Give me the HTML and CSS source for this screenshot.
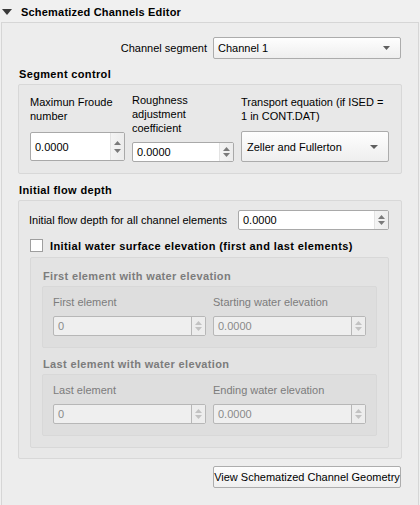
FILE: index.html
```html
<!DOCTYPE html>
<html>
<head>
<meta charset="utf-8">
<link rel="stylesheet" href="styles.css">
</head>
<body>
<div class="header">
  <svg class="caret" width="10" height="6" viewBox="0 0 10 6"><path d="M0 0H10L5 6Z" fill="#3a3a3a"/></svg>
  <span class="title">Schematized Channels Editor</span>
</div>
<div class="frame">
  <div class="row-seg">
    <span>Channel segment</span>
    <div class="combo combo-seg"><span>Channel 1</span><svg class="drop" width="7" height="4" viewBox="0 0 7 4"><path d="M0 0H7L3.5 4Z" fill="#5f5f5f"/></svg></div>
  </div>

  <div class="gtitle">Segment control</div>
  <div class="group g-seg">
    <div class="col c1">
      <div class="lbl">Maximun Froude<br>number</div>
      <div class="spin spin-tall"><span class="val">0.0000</span><span class="btns"><svg width="7" height="4" viewBox="0 0 7 4"><path d="M0 4H7L3.5 0Z"/></svg><svg width="7" height="4" viewBox="0 0 7 4"><path d="M0 0H7L3.5 4Z"/></svg></span></div>
    </div>
    <div class="col c2">
      <div class="lbl">Roughness<br>adjustment<br>coefficient</div>
      <div class="spin spin-c2"><span class="val">0.0000</span><span class="btns"><svg width="7" height="4" viewBox="0 0 7 4"><path d="M0 4H7L3.5 0Z"/></svg><svg width="7" height="4" viewBox="0 0 7 4"><path d="M0 0H7L3.5 4Z"/></svg></span></div>
    </div>
    <div class="col c3">
      <div class="lbl">Transport equation (if ISED =<br>1 in CONT.DAT)</div>
      <div class="combo combo-tall"><span>Zeller and Fullerton</span><svg class="drop" width="8" height="4" viewBox="0 0 8 4"><path d="M0 0H8L4 4Z" fill="#5f5f5f"/></svg></div>
    </div>
  </div>

  <div class="gtitle t2">Initial flow depth</div>
  <div class="group g-flow">
    <div class="row-depth">
      <span>Initial flow depth for all channel elements</span>
      <div class="spin spin-depth"><span class="val">0.0000</span><span class="btns"><svg width="7" height="4" viewBox="0 0 7 4"><path d="M0 4H7L3.5 0Z"/></svg><svg width="7" height="4" viewBox="0 0 7 4"><path d="M0 0H7L3.5 4Z"/></svg></span></div>
    </div>
    <div class="row-check">
      <span class="check"></span>
      <span class="check-lbl">Initial water surface elevation (first and last elements)</span>
    </div>
    <div class="group g-inner">
      <div class="gtitle dis">First element with water elevation</div>
      <div class="group g-sub">
        <div class="subcol">
          <div class="lbl dis-t">First element</div>
          <div class="spin dis-spin"><span class="val">0</span><span class="btns"><svg width="7" height="4" viewBox="0 0 7 4"><path d="M0 4H7L3.5 0Z"/></svg><svg width="7" height="4" viewBox="0 0 7 4"><path d="M0 0H7L3.5 4Z"/></svg></span></div>
        </div>
        <div class="subcol">
          <div class="lbl dis-t">Starting water elevation</div>
          <div class="spin dis-spin"><span class="val">0.0000</span><span class="btns"><svg width="7" height="4" viewBox="0 0 7 4"><path d="M0 4H7L3.5 0Z"/></svg><svg width="7" height="4" viewBox="0 0 7 4"><path d="M0 0H7L3.5 4Z"/></svg></span></div>
        </div>
      </div>
      <div class="gtitle dis t3">Last element with water elevation</div>
      <div class="group g-sub">
        <div class="subcol">
          <div class="lbl dis-t">Last element</div>
          <div class="spin dis-spin"><span class="val">0</span><span class="btns"><svg width="7" height="4" viewBox="0 0 7 4"><path d="M0 4H7L3.5 0Z"/></svg><svg width="7" height="4" viewBox="0 0 7 4"><path d="M0 0H7L3.5 4Z"/></svg></span></div>
        </div>
        <div class="subcol">
          <div class="lbl dis-t">Ending water elevation</div>
          <div class="spin dis-spin"><span class="val">0.0000</span><span class="btns"><svg width="7" height="4" viewBox="0 0 7 4"><path d="M0 4H7L3.5 0Z"/></svg><svg width="7" height="4" viewBox="0 0 7 4"><path d="M0 0H7L3.5 4Z"/></svg></span></div>
        </div>
      </div>
    </div>
  </div>

  <div class="row-btn">
    <div class="button">View Schematized Channel Geometry</div>
  </div>
</div>
</body>
</html>
```

FILE: styles.css
```css
* { box-sizing: border-box; }
html, body { margin: 0; padding: 0; }
body {
  background: #f0f0f0;
  font-family: "Liberation Sans", Arial, sans-serif;
  font-size: 11px;
  line-height: 14px;
  color: #000;
  width: 420px;
  height: 505px;
  overflow: hidden;
}
.header {
  height: 22px;
  display: flex;
  align-items: center;
  padding-left: 2px;
}
.caret { margin-top: 2px; }
.title {
  font-weight: bold;
  letter-spacing: 0.2px;
  margin-left: 9px;
  margin-top: 1px;
}
.frame {
  margin-left: 1px;
  width: 418px;
  height: 483px;
  border: 1px solid #d6d6d6;
  border-bottom: none;
  background: #ededed;
  padding: 0 16px 0 16px;
}
.row-seg {
  margin-top: 14px;
  height: 22px;
  display: flex;
  justify-content: flex-end;
  align-items: center;
  gap: 6px;
  padding-right: 1px;
}
.combo {
  display: flex;
  align-items: center;
  justify-content: space-between;
  border: 1px solid #acacac;
  border-radius: 2px;
  background: linear-gradient(#fefefe, #eeeeee);
  padding: 0 10px 0 5px;
}
.combo-seg { width: 188px; height: 22px; padding-left: 4px; }
.combo-tall { width: 148px; height: 31px; padding-left: 5px; padding-right: 10px; }
.gtitle {
  font-weight: bold;
  letter-spacing: 0.35px;
  height: 14px;
  margin-top: 8px;
  padding-left: 1px;
}
.gtitle.t2 { margin-top: 9px; }
.group {
  border: 1px solid #d8d8d8;
  border-radius: 2px;
  background: rgba(0, 0, 0, 0.018);
  margin-top: 3px;
}
.g-seg {
  height: 90px;
  display: flex;
  align-items: flex-start;
  padding-left: 11px;
  gap: 7px;
}
.col { display: flex; flex-direction: column; }
.c1 { width: 95px; padding-top: 10px; }
.c2 { width: 102px; padding-top: 8px; }
.c3 { width: 148px; padding-top: 10px; }
.c1 .spin { margin-top: 9px; }
.c2 .spin { margin-top: 7px; }
.c3 .combo { margin-top: 8px; }
.lbl { line-height: 14px; }

.spin {
  display: flex;
  align-items: stretch;
  background: #fff;
  border: 1px solid #a9a9a9;
  border-radius: 2px;
  height: 20px;
}
.spin .val {
  flex: 1;
  display: flex;
  align-items: center;
  padding-left: 4px;
}
.spin .btns {
  width: 14px;
  display: flex;
  flex-direction: column;
  align-items: center;
  justify-content: center;
  gap: 3px;
  background: linear-gradient(90deg, #f4f4f4, #ececec);
  border-left: 1px solid #e3e3e3;
  fill: #7a7a7a;
}
.spin-tall { height: 29px; }
.spin-tall .btns { gap: 4px; }
.spin-c2 { height: 20px; }
.spin-c2 .btns { gap: 2px; }

.g-flow {
  height: 259px;
  padding: 9px 12px 0 10px;
}
.row-depth {
  display: flex;
  align-items: center;
  height: 20px;
}
.spin-depth { width: 151px; margin-left: auto; }
.spin-depth .btns { gap: 2px; }
.row-check {
  display: flex;
  align-items: center;
  height: 18px;
  margin-top: 6px;
  padding-left: 1px;
}
.check {
  width: 13px;
  height: 13px;
  background: #fff;
  border: 1px solid #9e9e9e;
}
.check-lbl {
  font-weight: bold;
  letter-spacing: 0.4px;
  margin-left: 7px;
  margin-top: 1px;
}
.g-inner {
  height: 191px;
  margin-top: 3px;
  margin-left: 1px;
  padding: 11px 11px 0 11px;
}
.g-inner .gtitle { margin-top: 0; }
.gtitle.dis { color: #7c7c7c; padding-left: 1px; }
.g-inner .gtitle.t3 { margin-top: 9px; }
.g-sub {
  height: 62px;
  margin-top: 3px;
  display: flex;
  gap: 7px;
  padding: 8px 10px 0 10px;
}
.subcol { width: 153px; display: flex; flex-direction: column; }
.dis-t { color: #7c7c7c; }
.dis-spin {
  margin-top: 7px;
  background: #efefef;
  border-color: #b7b7b7;
  color: #8a8a8a;
  height: 20px;
}
.dis-spin .btns {
  fill: #c2c2c2;
  background: #ededed;
  border-left: 1px solid #b7b7b7;
  gap: 2px;
}
.row-btn {
  display: flex;
  justify-content: flex-end;
  margin-top: 7px;
  padding-right: 1px;
}
.button {
  width: 188px;
  height: 22px;
  border: 1px solid #adadad;
  border-radius: 2px;
  background: linear-gradient(#fdfdfd, #efefef);
  display: flex;
  align-items: center;
  justify-content: center;
}
```
